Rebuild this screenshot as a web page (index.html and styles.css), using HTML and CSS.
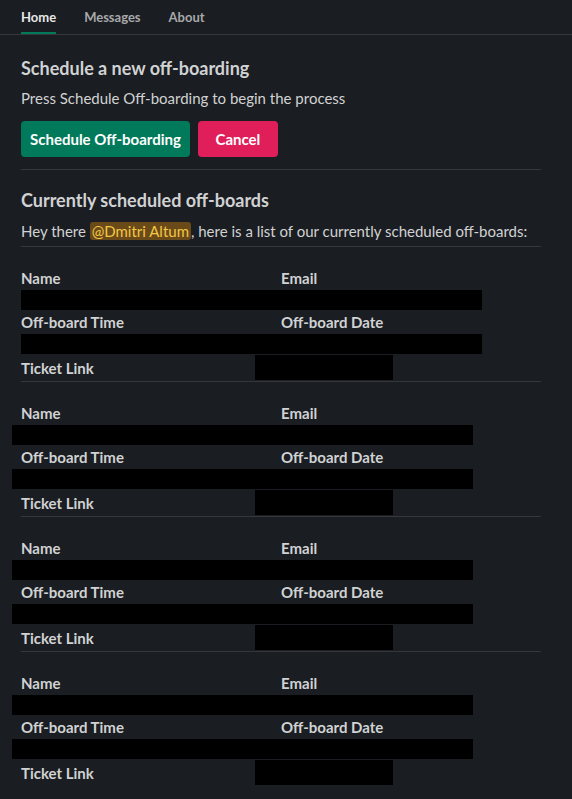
FILE: index.html
```html
<!DOCTYPE html>
<html lang="en">
<head>
<meta charset="utf-8">
<title>Off-boarding</title>
<link rel="stylesheet" href="styles.css">
</head>
<body>
<nav class="tabs">
  <a class="tab active">Home</a>
  <a class="tab">Messages</a>
  <a class="tab">About</a>
</nav>
<main class="content">
  <section class="block">
    <h1 class="heading">Schedule a new off-boarding</h1>
    <p class="text">Press Schedule Off-boarding to begin the process</p>
    <div class="actions">
      <button class="btn btn-primary">Schedule Off-boarding</button>
      <button class="btn btn-danger">Cancel</button>
    </div>
  </section>
  <hr class="divider divider-top">
  <section class="block">
    <h2 class="heading heading-2">Currently scheduled off-boards</h2>
    <p class="text text-tight">Hey there <span class="mention">@Dmitri Altum</span>, here is a list of our currently scheduled off-boards:</p>
  </section>
  <hr class="divider divider-list">

  <div class="record">
    <div class="labels"><span>Name</span><span>Email</span></div>
    <div class="redacted"></div>
    <div class="labels"><span>Off-board Time</span><span>Off-board Date</span></div>
    <div class="redacted"></div>
    <div class="ticket"><span class="ticket-label">Ticket Link</span><span class="ticket-box"></span></div>
  </div>
  <div class="record shifted">
    <div class="labels"><span>Name</span><span>Email</span></div>
    <div class="redacted"></div>
    <div class="labels"><span>Off-board Time</span><span>Off-board Date</span></div>
    <div class="redacted"></div>
    <div class="ticket"><span class="ticket-label">Ticket Link</span><span class="ticket-box"></span></div>
  </div>
  <div class="record shifted">
    <div class="labels"><span>Name</span><span>Email</span></div>
    <div class="redacted"></div>
    <div class="labels"><span>Off-board Time</span><span>Off-board Date</span></div>
    <div class="redacted"></div>
    <div class="ticket"><span class="ticket-label">Ticket Link</span><span class="ticket-box"></span></div>
  </div>
  <div class="record shifted last">
    <div class="labels"><span>Name</span><span>Email</span></div>
    <div class="redacted"></div>
    <div class="labels"><span>Off-board Time</span><span>Off-board Date</span></div>
    <div class="redacted"></div>
    <div class="ticket"><span class="ticket-label">Ticket Link</span><span class="ticket-box"></span></div>
  </div>
</main>
</body>
</html>
```
FILE: styles.css
```css
* { box-sizing: border-box; }
html, body {
  margin: 0;
  background: #1a1d21;
}
body {
  font-family: "Lato", "Noto Sans", "Liberation Sans", sans-serif;
  color: #d1d2d3;
  font-size: 15px;
  line-height: 22px;
  overflow: hidden;
}
.tabs {
  display: flex;
  gap: 28px;
  padding: 0 21px;
  height: 35px;
  border-bottom: 1px solid #35373b;
}
.tab {
  height: 34px;
  line-height: 34px;
  font-size: 13px;
  font-weight: 700;
  color: #a8a9ab;
}
.tab.active {
  color: #e8e8e8;
  box-shadow: inset 0 -2px 0 #007a5a;
}
.content {
  padding: 0 31px 0 21px;
}
.block { margin: 0; }
.heading {
  margin: 22px 0 0;
  font-size: 18px;
  line-height: 22px;
  font-weight: 700;
  color: #d1d2d3;
}
.heading-2 { margin-top: 19px; }
.text {
  margin: 8px 0 0;
}
.text-tight { margin-top: 9px; }
.actions {
  display: flex;
  gap: 8px;
  margin-top: 12px;
}
.btn {
  height: 36px;
  min-width: 80px;
  border: 0;
  border-radius: 4px;
  padding: 0 9px;
  font-family: inherit;
  font-size: 15px;
  font-weight: 700;
  color: #ffffff;
}
.btn-primary { background: #007a5a; }
.btn-danger { background: #e01e5a; }
.divider {
  border: 0;
  height: 1px;
  background: #35373b;
  margin: 12px 0 0;
}
.divider-list { margin-top: 4px; }
.mention {
  background: #6b4a1a;
  color: #f2c744;
  border-radius: 3px;
  padding: 0 2px;
}
.record {
  padding-top: 20px;
  padding-bottom: 1px;
  border-bottom: 1px solid #35373b;
}
.record.last { border-bottom: 0; }
.labels {
  display: grid;
  grid-template-columns: 260px 260px;
  height: 22px;
  font-weight: 700;
}
.redacted {
  width: 461px;
  height: 20px;
  margin: 1px 0;
  background: #000;
}
.shifted .redacted { margin-left: -9px; }
.ticket {
  display: flex;
  align-items: center;
  height: 25px;
  font-weight: 700;
}
.ticket-label { width: 234px; }
.ticket-box {
  width: 138px;
  height: 25px;
  background: #000;
}
```
